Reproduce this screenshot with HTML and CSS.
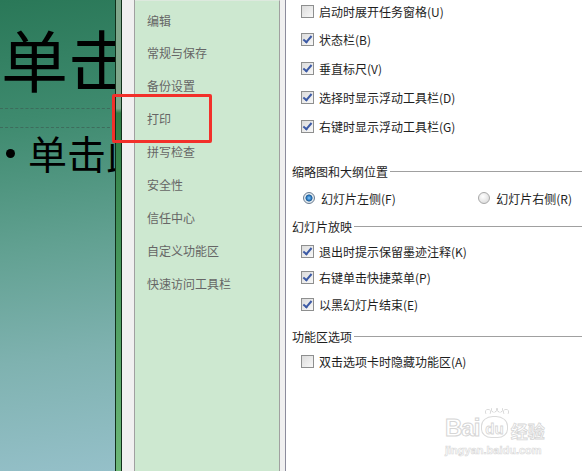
FILE: index.html
```html
<!DOCTYPE html>
<html lang="zh-CN">
<head>
    <meta charset="UTF-8">
    <meta name="viewport" content="width=device-width, initial-scale=1.0">
    <title>PowerPoint 选项</title>
    <link rel="stylesheet" href="styles.css">
</head>
<body>

    <div class="screen">

        <!-- Slide preview behind the dialog -->
        <div class="slide">
            <div class="slide-title">单击</div>
            <div class="slide-rule"></div>
            <div class="slide-rule second"></div>
            <div class="slide-body"><span class="bullet"></span>单击此</div>
        </div>

        <div class="strip"></div>
        <div class="gutter"></div>

        <!-- Options navigation -->
        <nav class="options-nav">
            <a>编辑</a>
            <a>常规与保存</a>
            <a>备份设置</a>
            <a>打印</a>
            <a>拼写检查</a>
            <a>安全性</a>
            <a>信任中心</a>
            <a>自定义功能区</a>
            <a>快速访问工具栏</a>
        </nav>

        <div class="gutter narrow"></div>

        <!-- Options content -->
        <main class="options">
            <div class="group first">
                <label class="row"><span class="check"></span>启动时展开任务窗格(U)</label>
                <label class="row"><span class="check on"></span>状态栏(B)</label>
                <label class="row"><span class="check on"></span>垂直标尺(V)</label>
                <label class="row"><span class="check on"></span>选择时显示浮动工具栏(D)</label>
                <label class="row"><span class="check on"></span>右键时显示浮动工具栏(G)</label>
            </div>

            <h3 class="heading thumbs">缩略图和大纲位置</h3>
            <div class="radio-row">
                <label class="row"><span class="radio on"></span>幻灯片左侧(F)</label>
                <label class="row"><span class="radio"></span>幻灯片右侧(R)</label>
            </div>

            <h3 class="heading show">幻灯片放映</h3>
            <div class="group tight">
                <label class="row"><span class="check on"></span>退出时提示保留墨迹注释(K)</label>
                <label class="row"><span class="check on"></span>右键单击快捷菜单(P)</label>
                <label class="row"><span class="check on"></span>以黑幻灯片结束(E)</label>
            </div>

            <h3 class="heading ribbon">功能区选项</h3>
            <div class="group last">
                <label class="row"><span class="check"></span>双击选项卡时隐藏功能区(A)</label>
            </div>

            <!-- Watermark -->
            <div class="watermark">
                <div class="wm-logo">
                    <span class="wm-bai">Bai</span>
                    <span class="wm-du">du</span>
                    <span class="wm-cn">经验</span>
                </div>
                <div class="wm-url">jingyan.baidu.com</div>
            </div>
        </main>

        <!-- Highlight drawn over the screenshot -->
        <div class="highlight"></div>
    </div>

</body>
</html>
```

FILE: styles.css
```css
/* Page */
body {
    margin: 0;
    padding: 0;
    background: white;
    font-family: "Noto Sans CJK SC", "Noto Sans", sans-serif;
    font-size: 12px;
    color: #1e1e1e;
}

.screen {
    position: relative;
    display: flex;
    width: 582px;
    height: 471px;
    overflow: hidden;
}

/* Slide preview */
.slide {
    width: 115px;
    flex-shrink: 0;
    overflow: hidden;
    white-space: nowrap;
    background: linear-gradient(172deg, #2a7858 0%, #3e8a6e 25%, #62a192 52%, #7fb2b0 75%, #95c0c9 100%);
}

.slide-title {
    font-size: 67px;
    line-height: 64px;
    margin: 26px 0 0 1px;
    color: black;
}

.slide-rule {
    margin-top: 18px;
    border-top: 1px dashed #3d6c5c;
    width: 115px;
}

.slide-rule.second {
    margin-top: 18px;
}

.slide-body {
    display: flex;
    align-items: center;
    font-size: 39px;
    line-height: 40px;
    margin-top: 4px;
    color: black;
}

.bullet {
    width: 9px;
    height: 9px;
    flex-shrink: 0;
    border-radius: 50%;
    background: black;
    margin: 2px 13px 0 6px;
}

/* Divider strips */
.strip {
    width: 5px;
    flex-shrink: 0;
    border-left: 1px solid #10301a;
    border-right: 1px solid #10301a;
    background: linear-gradient(to bottom, #7fa68a 0%, #7fa68a 23%, #2f7c45 24%, #4a9a5e 60%, #6db777 100%);
}

.gutter {
    width: 12px;
    flex-shrink: 0;
    background: #f0f0f0;
    border-right: 1px solid #a0a0a0;
}

.gutter.narrow {
    width: 5px;
    border-right: 1px solid #8c8c9c;
}

/* Navigation */
.options-nav {
    width: 132px;
    flex-shrink: 0;
    padding: 2.6px 0 0 12px;
    background: #cde8d0;
    border-right: 1px solid #a0a0a0;
    border-top: 1px solid #dde9de;
    box-sizing: content-box;
}

.options-nav a {
    display: flex;
    align-items: center;
    height: 32.875px;
    color: #666666;
    font-size: 12px;
}

/* Options */
.options {
    position: relative;
    flex: 1;
    padding-left: 6px;
}

.group {
    display: flex;
    flex-direction: column;
    gap: 12.75px;
    padding-left: 9px;
}

.group.first {
    margin-top: 3px;
}

.group.tight {
    gap: 10.5px;
    margin-top: 9px;
}

.group.last {
    margin-top: 9px;
}

.row {
    display: flex;
    align-items: center;
    gap: 5px;
    height: 16px;
    font-size: 12px;
    white-space: nowrap;
}

.check {
    width: 11px;
    height: 11px;
    border: 1px solid #8e8f8f;
    background: linear-gradient(135deg, #dcdcdc, #f8f8f8);
    position: relative;
    flex-shrink: 0;
}

.check.on::after {
    content: "";
    position: absolute;
    left: 3px;
    top: 0px;
    width: 3px;
    height: 7px;
    border-right: 2px solid #3c5aa5;
    border-bottom: 2px solid #3c5aa5;
    transform: rotate(40deg);
}

.heading {
    display: flex;
    align-items: center;
    gap: 2px;
    height: 16px;
    margin: 0;
    font-size: 12px;
    font-weight: normal;
    white-space: nowrap;
}

.heading::after {
    content: "";
    flex: 1;
    border-top: 1px solid #a0a0a0;
}

.heading.thumbs {
    margin-top: 29px;
}

.heading.show {
    margin-top: 12px;
}

.heading.ribbon {
    margin-top: 16px;
}

.radio-row {
    display: flex;
    justify-content: space-between;
    margin-top: 11px;
    padding: 0 10px 0 11px;
}

.radio-row .row {
    gap: 6px;
}

.radio {
    width: 10px;
    height: 10px;
    border-radius: 50%;
    border: 1px solid #a8a8a8;
    background: radial-gradient(circle at 40% 35%, #ffffff, #d4d4d4);
    flex-shrink: 0;
}

.radio.on {
    border-color: #6a7c90;
    background: radial-gradient(circle, #7fc8ff 0%, #1e6ab0 38%, #2a5c8a 45%, #e6eef4 55%, #cfd8e0 100%);
}

/* Watermark */
.watermark {
    position: absolute;
    left: 159px;
    top: 406px;
    width: 110px;
    white-space: nowrap;
    color: white;
    font-family: "Liberation Sans", Arial, sans-serif;
    font-weight: bold;
}

.wm-logo {
    display: flex;
    align-items: flex-end;
    height: 34px;
    line-height: 1;
}

.wm-bai {
    font-size: 24px;
    -webkit-text-stroke: 1px #d6d6d6;
    letter-spacing: -1px;
}

.wm-du {
    position: relative;
    font-size: 15px;
    margin: 0 3px 2px 2px;
    padding: 4px 3px 1px;
    border: 1px solid #dadada;
    border-radius: 45% 45% 40% 40%;
    -webkit-text-stroke: 0.8px #d6d6d6;
}

.wm-du::before {
    content: "";
    position: absolute;
    left: 3px;
    top: -9px;
    width: 24px;
    height: 6px;
    background:
        radial-gradient(circle at 3px 4px, transparent 2px, #dadada 2.5px, transparent 3.5px),
        radial-gradient(circle at 9px 1.5px, transparent 2px, #dadada 2.5px, transparent 3.5px),
        radial-gradient(circle at 15px 1.5px, transparent 2px, #dadada 2.5px, transparent 3.5px),
        radial-gradient(circle at 21px 4px, transparent 2px, #dadada 2.5px, transparent 3.5px);
}

.wm-cn {
    font-family: "Noto Sans CJK SC", sans-serif;
    font-size: 17px;
    -webkit-text-stroke: 0.8px #d6d6d6;
    margin-bottom: 1px;
}

.wm-url {
    font-size: 11px;
    line-height: 14px;
    margin-top: 3px;
    -webkit-text-stroke: 0.6px #d8d8d8;
}

/* Red highlight box */
.highlight {
    position: absolute;
    left: 112px;
    top: 94px;
    width: 94px;
    height: 43px;
    border: 3px solid #f2302a;
    border-radius: 2px;
}
```
